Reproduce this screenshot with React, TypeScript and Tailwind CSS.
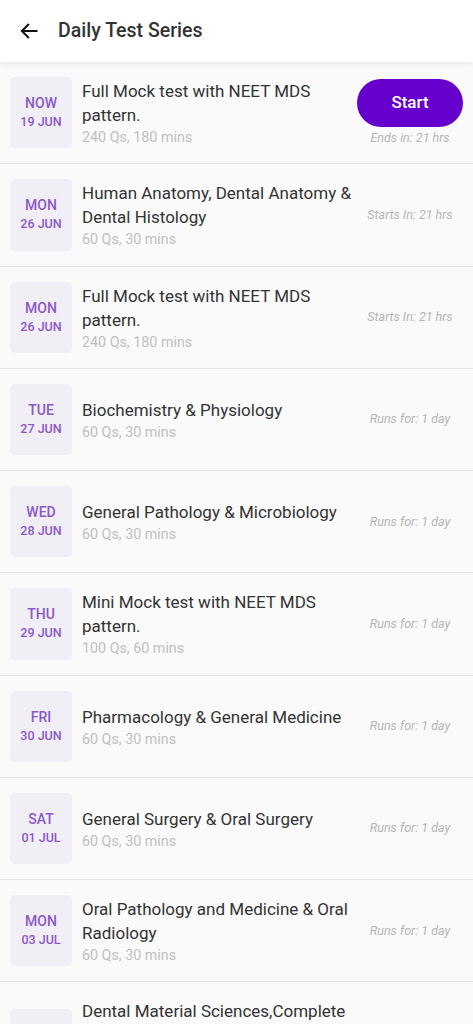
import React from "react";

interface TestItem {
  day: string;
  date: string;
  title: string;
  meta: string;
  note: string;
  live?: boolean;
}

const tests: TestItem[] = [
  { day: "NOW", date: "19 JUN", title: "Full Mock test with NEET MDS pattern.", meta: "240 Qs, 180 mins", note: "Ends in: 21 hrs", live: true },
  { day: "MON", date: "26 JUN", title: "Human Anatomy, Dental Anatomy & Dental Histology", meta: "60 Qs, 30 mins", note: "Starts In: 21 hrs" },
  { day: "MON", date: "26 JUN", title: "Full Mock test with NEET MDS pattern.", meta: "240 Qs, 180 mins", note: "Starts In: 21 hrs" },
  { day: "TUE", date: "27 JUN", title: "Biochemistry & Physiology", meta: "60 Qs, 30 mins", note: "Runs for: 1 day" },
  { day: "WED", date: "28 JUN", title: "General Pathology & Microbiology", meta: "60 Qs, 30 mins", note: "Runs for: 1 day" },
  { day: "THU", date: "29 JUN", title: "Mini Mock test with NEET MDS pattern.", meta: "100 Qs, 60 mins", note: "Runs for: 1 day" },
  { day: "FRI", date: "30 JUN", title: "Pharmacology & General Medicine", meta: "60 Qs, 30 mins", note: "Runs for: 1 day" },
  { day: "SAT", date: "01 JUL", title: "General Surgery & Oral Surgery", meta: "60 Qs, 30 mins", note: "Runs for: 1 day" },
  { day: "MON", date: "03 JUL", title: "Oral Pathology and Medicine & Oral Radiology", meta: "60 Qs, 30 mins", note: "Runs for: 1 day" },
  { day: "TUE", date: "04 JUL", title: "Dental Material Sciences,Complete Dentures & Removable Prosthodontics", meta: "60 Qs, 30 mins", note: "Runs for: 1 day" },
];

function TestRow({ item }: { item: TestItem }) {
  return (
    <div className="flex items-center border-b border-[#e4e4e4] bg-[#fafafa] py-[15px] pl-[10px] pr-[10px]">
      <div className="flex h-[71.25px] w-[62px] shrink-0 flex-col items-center justify-center rounded-[5px] bg-[#f1eef5] font-medium text-[#8b59c6]">
        <span className="text-[14px] leading-[19px]">{item.day}</span>
        <span className="text-[12.5px] leading-[18px]">{item.date}</span>
      </div>
      <div className="ml-[10px] mt-[2px] min-w-0 flex-1">
        <div className="text-[17px] leading-[24px] text-[#333333]">{item.title}</div>
        <div className="text-[14.3px] leading-[21px] text-[#c0c0c0]">{item.meta}</div>
      </div>
      <div className="flex w-[106px] shrink-0 flex-col items-center">
        {item.live && (
          <button className="mb-[2px] h-[48px] w-[106px] rounded-full bg-[#6600cc] text-[17px] font-medium text-white">
            Start
          </button>
        )}
        <span className="text-[12.5px] italic leading-[18px] text-[#b5b5b5]">{item.note}</span>
      </div>
    </div>
  );
}

export default function App() {
  return (
    <div className="h-[1024px] overflow-hidden bg-[#fafafa]" style={{ fontFamily: "Roboto, 'Liberation Sans', sans-serif" }}>
      <div className="relative z-10 flex h-[62px] items-center bg-white pl-[19px] shadow-[0_2px_6px_rgba(0,0,0,0.08)]">
        <svg width="20" height="20" viewBox="0 0 24 24" fill="none" stroke="#111" strokeWidth="2.4" strokeLinecap="square">
          <path d="M21 12H4" />
          <path d="M11 4.5L3.5 12l7.5 7.5" />
        </svg>
        <span className="ml-[19px] text-[19.5px] font-medium text-[#333333]">Daily Test Series</span>
      </div>
      {tests.map((t, i) => (
        <TestRow key={i} item={t} />
      ))}
    </div>
  );
}
